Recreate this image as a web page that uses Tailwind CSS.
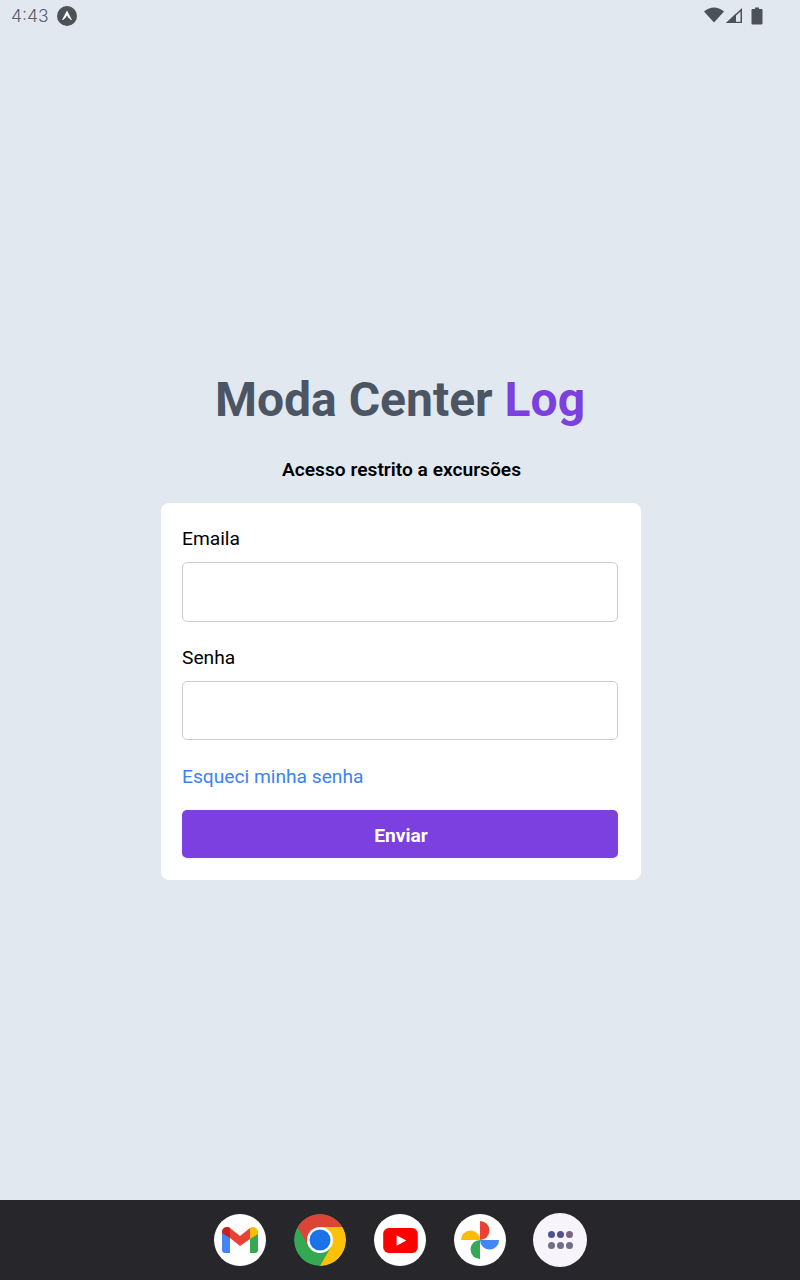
<!DOCTYPE html>
<html lang="en">
<head>
  <meta charset="UTF-8" />
  <meta name="viewport" content="width=device-width, initial-scale=1.0" />
  <title>Moda Center Log</title>
  <script src="https://cdn.jsdelivr.net/npm/@tailwindcss/browser@4"></script>
</head>

<body class="bg-[#e2e8f0] font-['Roboto',sans-serif] text-black">
  <div class="flex flex-col h-[1280px] overflow-hidden">

    <!-- Status bar -->
    <div class="h-8 shrink-0 flex items-center justify-between pl-[11px] pr-[37px] text-[#5a6068]">
      <div class="flex items-center gap-[8px]">
        <span class="text-[17.5px] leading-none font-['Inter',sans-serif] font-light">4:43</span>
        <svg class="w-5 h-5" viewBox="0 0 20 20">
          <circle cx="10" cy="10" r="10" fill="#4d5158"/>
          <path d="M10 4.5 L15 14 L12.6 14 L10 9.2 L7.4 14 L5 14 Z" fill="#fff"/>
          <path d="M6.5 14.5 Q10 10.5 13.5 14.5" fill="none" stroke="#4d5158" stroke-width="1.4"/>
        </svg>
      </div>
      <div class="flex items-center gap-[1px]">
        <svg class="w-5 h-4 -mt-[2px]" viewBox="0 0 20 16"><path d="M0 4.5 Q10 -3.5 20 4.5 L10 15.5 Z" fill="#4d5158"/></svg>
        <svg class="w-[18px] h-[18px]" viewBox="0 0 18 18"><path d="M17 1 L17 16 L1 16 Z M15.5 4.5 L4.5 14.7 L15.5 14.7 Z" fill="#4d5158" fill-rule="evenodd"/><path d="M1 16 L11 6.5 L11 16 Z" fill="#4d5158"/></svg>
        <svg class="w-[12px] h-[18px] ml-[7px]" viewBox="0 0 12 18"><path d="M4 0.5 H8 V2 H10.5 A1 1 0 0 1 11.5 3 V16.5 A1 1 0 0 1 10.5 17.5 H1.5 A1 1 0 0 1 0.5 16.5 V3 A1 1 0 0 1 1.5 2 H4 Z" fill="#4d5158"/></svg>
      </div>
    </div>

    <!-- Login -->
    <main class="flex-1 flex flex-col items-center pt-[336px]">
      <h1 class="text-[48px] leading-[64px] font-bold text-[#4b5563]">Moda Center <span class="text-[#7c3fe0]">Log</span></h1>
      <p class="mt-[26px] ml-[3px] text-[19.2px] leading-[24px] font-semibold">Acesso restrito a excursões</p>

      <form class="mt-[21px] ml-[2px] w-[480px] h-[377px] bg-white rounded-lg px-[21px] pt-[23px]">
        <label class="block text-[19.2px] leading-[26px]">Emaila</label>
        <input type="text" class="mt-[10px] block w-[436px] h-[60px] border border-[#c9ccd1] rounded-[5px] bg-white" />
        <label class="block mt-[23px] text-[19.2px] leading-[26px]">Senha</label>
        <input type="password" class="mt-[10px] block w-[436px] h-[59px] border border-[#c9ccd1] rounded-[5px] bg-white" />
        <a href="#" class="block mt-[24px] text-[19.2px] leading-[26px] text-[#3b82f6]">Esqueci minha senha</a>
        <button type="button" class="mt-[20px] block w-[436px] h-[48px] pl-[2px] pt-[4px] bg-[#7c3fe0] rounded-[5px] text-white text-[19.2px] font-bold">Enviar</button>
      </form>
    </main>

    <!-- Dock -->
    <div class="h-20 shrink-0 bg-[#26262b] flex items-center justify-center gap-7">
      <div class="w-[52px] h-[52px] rounded-full bg-white flex items-center justify-center">
        <svg class="w-[38px] h-[30px]" viewBox="0 0 38 30">
          <path d="M1 6 V25 A3 3 0 0 0 4 28 H9 V12 Z" fill="#4285f4"/>
          <path d="M29 12 V28 H34 A3 3 0 0 0 37 25 V6 Z" fill="#34a853"/>
          <path d="M1 7 A5 5 0 0 1 9 3 L19 11 L29 3 V14 L19 21 L9 13 L2 8 Z" fill="#ea4335"/>
          <path d="M29 3 A5 5 0 0 1 37 7 V9 L29 14 Z" fill="#fbbc04"/>
          <path d="M1 7 A5 5 0 0 1 9 3 V13 L1 8 Z" fill="#c5221f"/>
        </svg>
      </div>
      <div class="w-[52px] h-[52px] rounded-full overflow-hidden">
        <svg class="w-[52px] h-[52px]" viewBox="0 0 52 52">
          <circle cx="26" cy="26" r="26" fill="#34a853"/>
          <path d="M3.5 13 A26 26 0 0 1 48.5 13 L26 13 L26 26 L14.7 32.5 Z" fill="#db4437"/>
          <path d="M48.5 13 A26 26 0 0 1 26 52 L37.3 32.5 L26 26 L26 13 Z" fill="#ffc107"/>
          <circle cx="26" cy="26" r="13" fill="#fff"/>
          <circle cx="26" cy="26" r="10.5" fill="#1a73e8"/>
        </svg>
      </div>
      <div class="w-[52px] h-[52px] rounded-full bg-white flex items-center justify-center">
        <svg class="w-[35px] h-[25px]" viewBox="0 0 36 26">
          <rect x="0" y="0" width="36" height="26" rx="6" fill="#f00"/>
          <path d="M14 7.5 L24 13 L14 18.5 Z" fill="#fff"/>
        </svg>
      </div>
      <div class="w-[52px] h-[52px] rounded-full bg-white flex items-center justify-center">
        <svg class="w-[40px] h-[40px]" viewBox="0 0 40 40">
          <path d="M20 20 V1 A9.5 9.5 0 0 1 20 20 Z" fill="#ea4335"/>
          <path d="M20 20 H39 A9.5 9.5 0 0 1 20 20 Z" fill="#4285f4"/>
          <path d="M20 20 V39 A9.5 9.5 0 0 1 20 20 Z" fill="#34a853"/>
          <path d="M20 20 H1 A9.5 9.5 0 0 1 20 20 Z" fill="#fbbc04"/>
        </svg>
      </div>
      <div class="w-[54px] h-[54px] -mx-px rounded-full bg-[#f8f4fb] grid grid-cols-[7px_7px_7px] gap-x-[2px] gap-y-[4px] content-center justify-center">
        <span class="w-[7px] h-[7px] rounded-full bg-[#4f5490]"></span>
        <span class="w-[7px] h-[7px] rounded-full bg-[#4f5490]"></span>
        <span class="w-[7px] h-[7px] rounded-full bg-[#7d6485]"></span>
        <span class="w-[7px] h-[7px] rounded-full bg-[#6f6f85]"></span>
        <span class="w-[7px] h-[7px] rounded-full bg-[#6f6f85]"></span>
        <span class="w-[7px] h-[7px] rounded-full bg-[#6f6f85]"></span>
      </div>
    </div>
  </div>
</body>
</html>
